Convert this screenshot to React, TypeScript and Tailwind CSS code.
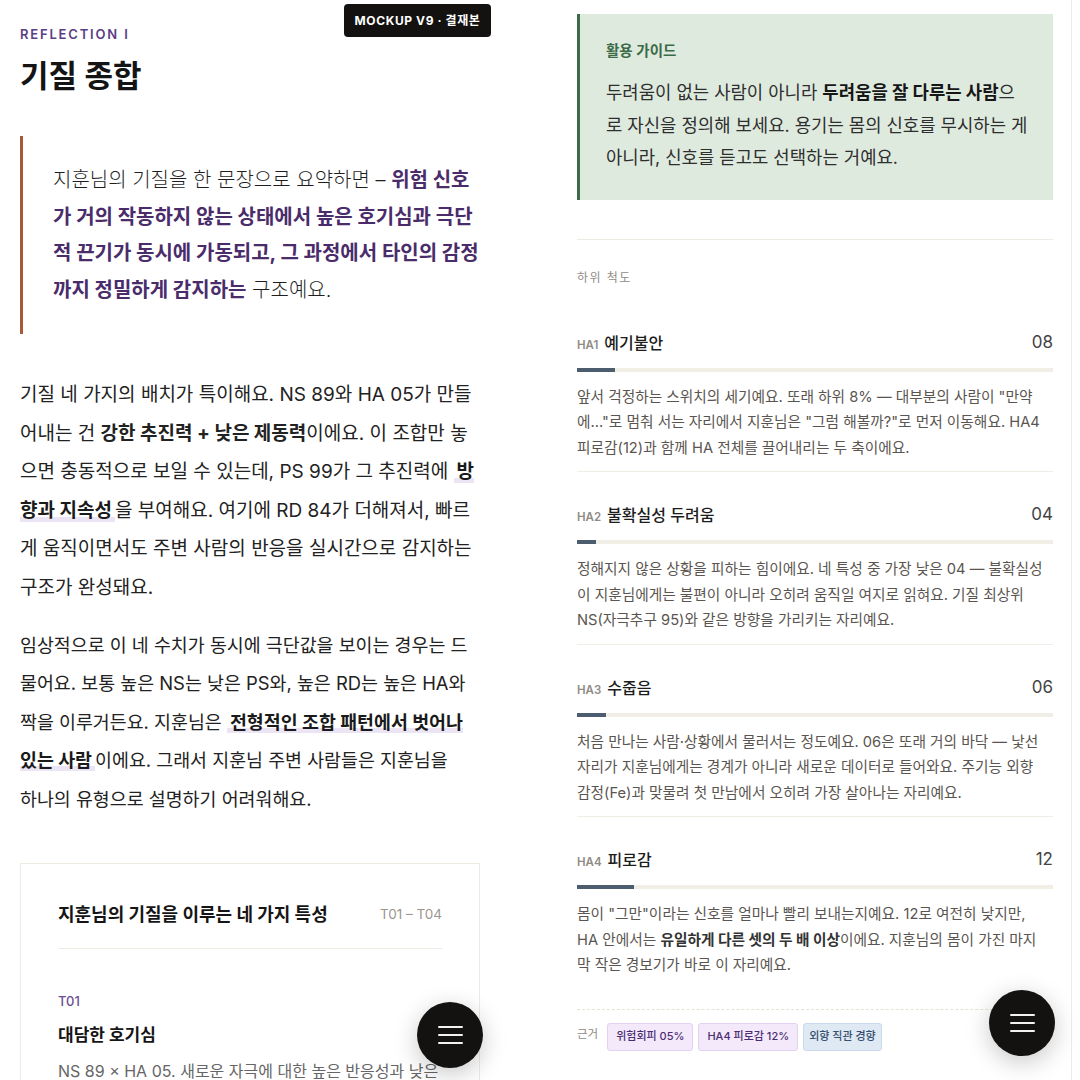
import React from 'react';

const font = { fontFamily: 'Inter, "Noto Sans CJK KR", sans-serif' };

interface Scale {
  code: string;
  name: string;
  value: string;
  pct: number;
  desc: React.ReactNode;
}

const scales: Scale[] = [
  {
    code: 'HA1',
    name: '예기불안',
    value: '08',
    pct: 8,
    desc: '앞서 걱정하는 스위치의 세기예요. 또래 하위 8% — 대부분의 사람이 "만약에..."로 멈춰 서는 자리에서 지훈님은 "그럼 해볼까?"로 먼저 이동해요. HA4 피로감(12)과 함께 HA 전체를 끌어내리는 두 축이에요.',
  },
  {
    code: 'HA2',
    name: '불확실성 두려움',
    value: '04',
    pct: 4,
    desc: '정해지지 않은 상황을 피하는 힘이에요. 네 특성 중 가장 낮은 04 — 불확실성이 지훈님에게는 불편이 아니라 오히려 움직일 여지로 읽혀요. 기질 최상위 NS(자극추구 95)와 같은 방향을 가리키는 자리예요.',
  },
  {
    code: 'HA3',
    name: '수줍음',
    value: '06',
    pct: 6,
    desc: '처음 만나는 사람·상황에서 물러서는 정도예요. 06은 또래 거의 바닥 — 낯선 자리가 지훈님에게는 경계가 아니라 새로운 데이터로 들어와요. 주기능 외향 감정(Fe)과 맞물려 첫 만남에서 오히려 가장 살아나는 자리예요.',
  },
  {
    code: 'HA4',
    name: '피로감',
    value: '12',
    pct: 12,
    desc: (
      <>
        몸이 "그만"이라는 신호를 얼마나 빨리 보내는지예요. 12로 여전히 낮지만,
        <br />
        HA 안에서는 <b className="font-bold text-[#333]">유일하게 다른 셋의 두 배 이상</b>이에요. 지훈님의 몸이 가진 마지막 작은 경보기가 바로 이 자리예요.
      </>
    ),
  },
];

const Fab: React.FC<{ className: string }> = ({ className }) => (
  <button
    className={`absolute w-[66px] h-[66px] rounded-full bg-[#141210] flex flex-col items-center justify-center gap-[5.5px] shadow-[0_6px_24px_rgba(0,0,0,0.22)] ${className}`}
  >
    <span className="block w-[25px] h-[2.5px] rounded bg-[#f2f2f2]" />
    <span className="block w-[25px] h-[2.5px] rounded bg-[#f2f2f2]" />
    <span className="block w-[25px] h-[2.5px] rounded bg-[#f2f2f2]" />
  </button>
);

const Mark: React.FC<{ children: React.ReactNode }> = ({ children }) => (
  <b className="font-bold text-[#1a1a1a] px-[3px] bg-[linear-gradient(transparent_78%,#ebe4f5_78%)]">{children}</b>
);

const tagPurple = 'h-[28px] px-[8px] flex items-center rounded-[3px] border border-[#e3d0f2] bg-[#f3e9fa] text-[11px] font-medium text-[#4b2d73]';
const tagBlue = 'h-[28px] px-[5px] flex items-center rounded-[3px] border border-[#c8daec] bg-[#dfe9f4] text-[11px] font-medium text-[#36506f]';

export default function App() {
  return (
    <div className="w-[1080px] h-[1080px] overflow-hidden bg-white flex relative text-[#222]" style={font}>
      {/* left page */}
      <div className="w-[540px] h-full relative pl-5 pt-6">
        <div className="w-[460px]">
          <p className="text-[13px] leading-5 font-semibold tracking-[0.14em] text-[#5a3e85]">REFLECTION I</p>
          <h1 className="mt-3 text-[31px] leading-10 font-bold text-[#141414]">기질 종합</h1>

          <div className="mt-10 border-l-[3px] border-[#a65a3a] pl-[30px] pt-[26px] pb-[26px]">
            <p className="text-[20px] leading-[36.5px] font-light text-[#1e1e1e]">
              지훈님의 기질을 한 문장으로 요약하면 –{' '}
              <b className="font-bold text-[#4a2c6b]">
                위험 신호가 거의 작동하지 않는 상태에서 높은 호기심과 극단적 끈기가 동시에 가동되고, 그 과정에서 타인의 감정까지 정밀하게 감지하는
              </b>{' '}
              구조예요.
            </p>
          </div>

          <p className="mt-[42px] text-[19px] leading-[38.6px] text-[#222]">
            기질 네 가지의 배치가 특이해요. NS 89와 HA 05가 만들어내는 건 <b className="font-bold">강한 추진력 + 낮은 제동력</b>이에요. 이 조합만 놓으면 충동적으로 보일 수 있는데, PS 99가 그 추진력에 <Mark>방향과 지속성</Mark>을 부여해요. 여기에 RD 84가 더해져서, 빠르게 움직이면서도 주변 사람의 반응을 실시간으로 감지하는 구조가 완성돼요.
          </p>
          <p className="mt-[18px] text-[18.4px] leading-[38.6px] text-[#222]">
            임상적으로 이 네 수치가 동시에 극단값을 보이는 경우는 드물어요. 보통 높은 NS는 낮은 PS와, 높은 RD는 높은 HA와 짝을 이루거든요. 지훈님은 <Mark>전형적인 조합 패턴에서 벗어나 있는 사람</Mark>이에요. 그래서 지훈님 주변 사람들은 지훈님을
            <br />
            하나의 유형으로 설명하기 어려워해요.
          </p>

          <div className="mt-[44px] border border-[#efebe3] px-[37px] pt-[37px] pb-8">
            <div className="flex items-center justify-between pb-[19px] border-b border-[#efebe3]">
              <h2 className="text-[18px] leading-7 font-bold text-[#151515]">지훈님의 기질을 이루는 네 가지 특성</h2>
              <span className="text-[13.5px] text-[#9a9690]">T01 – T04</span>
            </div>
            <p className="mt-[43px] text-[13px] leading-[18px] font-medium text-[#6b4f92]">T01</p>
            <h3 className="mt-[11px] text-[17px] leading-7 font-bold text-[#151515]">대담한 호기심</h3>
            <p className="mt-[9px] text-[16px] leading-[26px] text-[#666]">
              NS 89 × HA 05. 새로운 자극에 대한 높은 반응성과 낮은 불안이 만나, 망설임 없이 먼저 움직여요.
            </p>
          </div>
        </div>

        <div className="absolute left-[344px] top-[4px] h-[33px] w-[147px] rounded bg-[#141210] flex items-center justify-center text-white text-[12px] font-bold tracking-[0.05em]">
          MOCKUP V9 · 결재본
        </div>
        <Fab className="left-[417px] top-[1002px]" />
      </div>

      {/* right page */}
      <div className="w-[532px] h-full relative pl-[37px] pr-[18px] pt-[14px] border-r border-[#ececec]">
        <div className="bg-[#dfeadf] border-l-[3px] border-[#3d6b47] pl-[26px] pr-[24px] pt-[27px] pb-[25px]">
          <p className="text-[14.5px] leading-5 font-semibold text-[#3b6b47]">활용 가이드</p>
          <p className="mt-4 text-[17.8px] leading-[32.5px] text-[#2e2e2e]">
            두려움이 없는 사람이 아니라 <b className="font-bold text-[#161616]">두려움을 잘 다루는 사람</b>으로 자신을 정의해 보세요. 용기는 몸의 신호를 무시하는 게 아니라, 신호를 듣고도 선택하는 거예요.
          </p>
        </div>

        <div className="mt-[39px] border-t border-[#eeeae4]" />
        <p className="mt-[29px] text-[12px] leading-[18px] tracking-[0.12em] text-[#8f8b85]">하위 척도</p>

        <div className="mt-[44px]">
          {scales.map((s, i) => (
            <div key={s.code} className={i < scales.length - 1 ? 'border-b border-[#f0ede6] pb-[10px] mb-[31px]' : ''}>
              <div className="flex items-center justify-between h-6">
                <div className="flex items-baseline gap-[6px]">
                  <span className="text-[11.5px] font-semibold text-[#8f8b85]">{s.code}</span>
                  <span className="text-[16px] font-medium text-[#1c1c1c]">{s.name}</span>
                </div>
                <span className="text-[17px] text-[#444]">{s.value}</span>
              </div>
              <div className="mt-[13px] h-1 bg-[#f1eee6]">
                <div className="h-full bg-[#4b5d6e]" style={{ width: `${s.pct}%` }} />
              </div>
              <p className="mt-[13px] w-[470px] text-[14.7px] leading-[25.5px] text-[#5a5550]">{s.desc}</p>
            </div>
          ))}
        </div>

        <div className="mt-[30px] border-t border-dashed border-[#e6e2d8]" />
        <div className="mt-[13px] flex items-start gap-[9px]">
          <span className="pt-[3px] text-[11.5px] text-[#8f8b85]">근거</span>
          <div className="flex gap-[5px]">
            <span className={tagPurple}>위험회피 05%</span>
            <span className={tagPurple}>HA4 피로감 12%</span>
            <span className={tagBlue}>외향 직관 경향</span>
          </div>
        </div>

        <Fab className="left-[449px] top-[990px]" />
      </div>
    </div>
  );
}
